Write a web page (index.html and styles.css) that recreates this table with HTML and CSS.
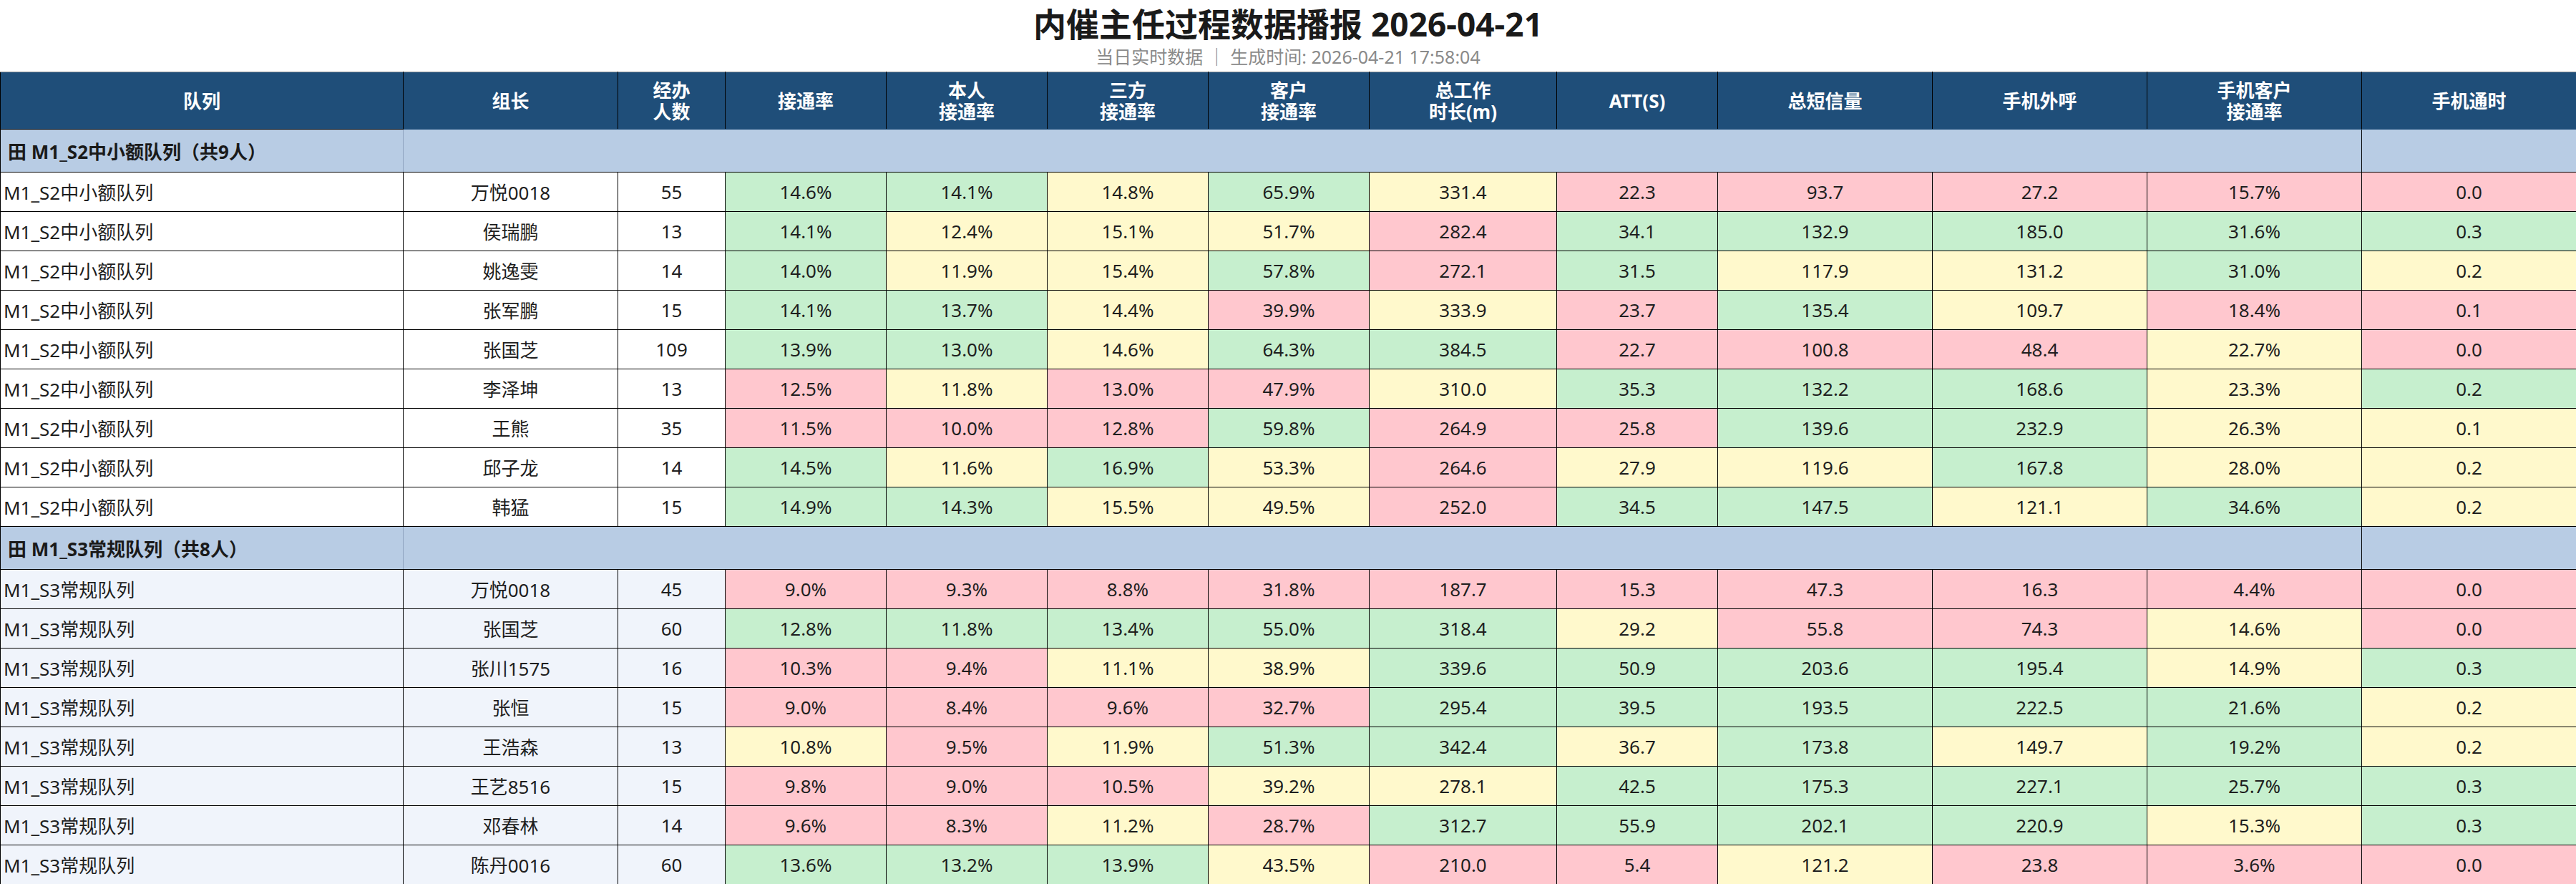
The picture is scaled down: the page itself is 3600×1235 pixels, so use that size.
FILE: index.html
```html
<!DOCTYPE html>
<html lang="zh-CN">
<head>
<meta charset="utf-8">
<title>内催主任过程数据播报</title>
<link rel="stylesheet" href="styles.css">
</head>
<body>
<header class="page-head">
  <h1 class="title">内催主任过程数据播报 2026-04-21</h1>
  <div class="sub">当日实时数据 ｜ 生成时间: 2026-04-21 17:58:04</div>
</header>
<table class="report">
  <colgroup>
    <col class="c-queue"><col class="c-lead"><col class="c-num">
    <col class="c-m"><col class="c-m"><col class="c-m"><col class="c-m">
    <col class="c-wide"><col class="c-m">
    <col class="c-l"><col class="c-l"><col class="c-l"><col class="c-l">
  </colgroup>
  <thead>
    <tr>
      <th>队列</th><th>组长</th><th>经办<br>人数</th><th>接通率</th><th>本人<br>接通率</th><th>三方<br>接通率</th><th>客户<br>接通率</th><th>总工作<br>时长(m)</th><th>ATT(S)</th><th>总短信量</th><th>手机外呼</th><th>手机客户<br>接通率</th><th>手机通时</th>
    </tr>
  </thead>
  <tbody>
    <tr class="grp"><td class="grp-name">田 M1_S2中小额队列（共9人）</td><td class="grp-span" colspan="11"></td><td class="grp-end"></td></tr>
    <tr class="row"><td class="q">M1_S2中小额队列</td><td>万悦0018</td><td>55</td><td class="g">14.6%</td><td class="g">14.1%</td><td class="y">14.8%</td><td class="g">65.9%</td><td class="y">331.4</td><td class="p">22.3</td><td class="p">93.7</td><td class="p">27.2</td><td class="p">15.7%</td><td class="p">0.0</td></tr>
    <tr class="row"><td class="q">M1_S2中小额队列</td><td>侯瑞鹏</td><td>13</td><td class="g">14.1%</td><td class="y">12.4%</td><td class="y">15.1%</td><td class="y">51.7%</td><td class="p">282.4</td><td class="g">34.1</td><td class="g">132.9</td><td class="g">185.0</td><td class="g">31.6%</td><td class="g">0.3</td></tr>
    <tr class="row"><td class="q">M1_S2中小额队列</td><td>姚逸雯</td><td>14</td><td class="g">14.0%</td><td class="y">11.9%</td><td class="y">15.4%</td><td class="g">57.8%</td><td class="p">272.1</td><td class="g">31.5</td><td class="y">117.9</td><td class="y">131.2</td><td class="g">31.0%</td><td class="y">0.2</td></tr>
    <tr class="row"><td class="q">M1_S2中小额队列</td><td>张军鹏</td><td>15</td><td class="g">14.1%</td><td class="g">13.7%</td><td class="y">14.4%</td><td class="p">39.9%</td><td class="y">333.9</td><td class="p">23.7</td><td class="g">135.4</td><td class="y">109.7</td><td class="p">18.4%</td><td class="p">0.1</td></tr>
    <tr class="row"><td class="q">M1_S2中小额队列</td><td>张国芝</td><td>109</td><td class="g">13.9%</td><td class="g">13.0%</td><td class="y">14.6%</td><td class="g">64.3%</td><td class="g">384.5</td><td class="p">22.7</td><td class="p">100.8</td><td class="p">48.4</td><td class="y">22.7%</td><td class="p">0.0</td></tr>
    <tr class="row"><td class="q">M1_S2中小额队列</td><td>李泽坤</td><td>13</td><td class="p">12.5%</td><td class="y">11.8%</td><td class="p">13.0%</td><td class="p">47.9%</td><td class="y">310.0</td><td class="g">35.3</td><td class="g">132.2</td><td class="g">168.6</td><td class="y">23.3%</td><td class="g">0.2</td></tr>
    <tr class="row"><td class="q">M1_S2中小额队列</td><td>王熊</td><td>35</td><td class="p">11.5%</td><td class="p">10.0%</td><td class="p">12.8%</td><td class="g">59.8%</td><td class="p">264.9</td><td class="p">25.8</td><td class="g">139.6</td><td class="g">232.9</td><td class="y">26.3%</td><td class="y">0.1</td></tr>
    <tr class="row"><td class="q">M1_S2中小额队列</td><td>邱子龙</td><td>14</td><td class="g">14.5%</td><td class="y">11.6%</td><td class="g">16.9%</td><td class="y">53.3%</td><td class="p">264.6</td><td class="y">27.9</td><td class="y">119.6</td><td class="g">167.8</td><td class="y">28.0%</td><td class="y">0.2</td></tr>
    <tr class="row"><td class="q">M1_S2中小额队列</td><td>韩猛</td><td>15</td><td class="g">14.9%</td><td class="g">14.3%</td><td class="y">15.5%</td><td class="y">49.5%</td><td class="p">252.0</td><td class="g">34.5</td><td class="g">147.5</td><td class="y">121.1</td><td class="g">34.6%</td><td class="y">0.2</td></tr>
    <tr class="grp"><td class="grp-name">田 M1_S3常规队列（共8人）</td><td class="grp-span" colspan="11"></td><td class="grp-end"></td></tr>
    <tr class="row alt"><td class="q">M1_S3常规队列</td><td>万悦0018</td><td>45</td><td class="p">9.0%</td><td class="p">9.3%</td><td class="p">8.8%</td><td class="p">31.8%</td><td class="p">187.7</td><td class="p">15.3</td><td class="p">47.3</td><td class="p">16.3</td><td class="p">4.4%</td><td class="p">0.0</td></tr>
    <tr class="row alt"><td class="q">M1_S3常规队列</td><td>张国芝</td><td>60</td><td class="g">12.8%</td><td class="g">11.8%</td><td class="g">13.4%</td><td class="g">55.0%</td><td class="g">318.4</td><td class="y">29.2</td><td class="p">55.8</td><td class="p">74.3</td><td class="y">14.6%</td><td class="p">0.0</td></tr>
    <tr class="row alt"><td class="q">M1_S3常规队列</td><td>张川1575</td><td>16</td><td class="p">10.3%</td><td class="p">9.4%</td><td class="y">11.1%</td><td class="y">38.9%</td><td class="g">339.6</td><td class="g">50.9</td><td class="g">203.6</td><td class="g">195.4</td><td class="y">14.9%</td><td class="g">0.3</td></tr>
    <tr class="row alt"><td class="q">M1_S3常规队列</td><td>张恒</td><td>15</td><td class="p">9.0%</td><td class="p">8.4%</td><td class="p">9.6%</td><td class="p">32.7%</td><td class="g">295.4</td><td class="g">39.5</td><td class="g">193.5</td><td class="g">222.5</td><td class="g">21.6%</td><td class="y">0.2</td></tr>
    <tr class="row alt"><td class="q">M1_S3常规队列</td><td>王浩森</td><td>13</td><td class="y">10.8%</td><td class="p">9.5%</td><td class="y">11.9%</td><td class="g">51.3%</td><td class="g">342.4</td><td class="y">36.7</td><td class="g">173.8</td><td class="y">149.7</td><td class="g">19.2%</td><td class="y">0.2</td></tr>
    <tr class="row alt"><td class="q">M1_S3常规队列</td><td>王艺8516</td><td>15</td><td class="p">9.8%</td><td class="p">9.0%</td><td class="p">10.5%</td><td class="y">39.2%</td><td class="y">278.1</td><td class="g">42.5</td><td class="g">175.3</td><td class="g">227.1</td><td class="g">25.7%</td><td class="g">0.3</td></tr>
    <tr class="row alt"><td class="q">M1_S3常规队列</td><td>邓春林</td><td>14</td><td class="p">9.6%</td><td class="p">8.3%</td><td class="y">11.2%</td><td class="p">28.7%</td><td class="g">312.7</td><td class="g">55.9</td><td class="g">202.1</td><td class="g">220.9</td><td class="y">15.3%</td><td class="g">0.3</td></tr>
    <tr class="row alt"><td class="q">M1_S3常规队列</td><td>陈丹0016</td><td>60</td><td class="g">13.6%</td><td class="g">13.2%</td><td class="g">13.9%</td><td class="y">43.5%</td><td class="p">210.0</td><td class="p">5.4</td><td class="y">121.2</td><td class="p">23.8</td><td class="p">3.6%</td><td class="p">0.0</td></tr>
  </tbody>
</table>
</body>
</html>
```

FILE: styles.css
```css
html, body {
  margin: 0;
  padding: 0;
  background: #ffffff;
}

body {
  font-family: "Noto Sans", "Noto Sans CJK SC", sans-serif;
  color: #222222;
}

.page-head {
  height: 100px;
  box-sizing: border-box;
  padding-top: 6px;
  text-align: center;
}

.title {
  margin: 0;
  font-size: 46px;
  line-height: 55px;
  font-weight: 700;
  color: #1a1a1a;
}

.sub {
  margin-top: 3px;
  font-size: 25px;
  line-height: 30px;
  color: #8a8a8a;
}

.report {
  width: 3600px;
  table-layout: fixed;
  border-collapse: collapse;
  font-size: 26px;
}

.c-queue { width: 563px; }
.c-lead { width: 300px; }
.c-num { width: 150px; }
.c-m { width: 225px; }
.c-wide { width: 262px; }
.c-l { width: 300px; }

.report th,
.report td {
  border: 1px solid #000000;
  padding: 0 4px;
  box-sizing: border-box;
}

.report thead th {
  height: 80px;
  background: #1f4e79;
  color: #ffffff;
  font-weight: 700;
  line-height: 30px;
  text-align: center;
  border-top: 1px solid #9a9a9a;
  border-bottom-color: #1f4e79;
}

.report thead th:first-child {
  border-bottom-color: #000000;
}

.grp td {
  height: 60px;
  background: #b8cce4;
}

.grp .grp-name {
  padding-left: 10px;
  font-weight: 700;
  color: #1a1a1a;
  text-align: left;
  border-right-color: #8fa3bf;
  border-top-color: #000000;
}

.grp .grp-span {
  border-left-color: #8fa3bf;
  border-top-color: #1f4e79;
  border-right-color: #000000;
}

.row td {
  height: 55px;
  text-align: center;
  background: #ffffff;
  color: #1e1e1e;
}

.row td.q {
  text-align: left;
}

.row.alt td {
  background: #f0f4fb;
}

.row td.g,
.row.alt td.g {
  background: #c6efce;
}

.row td.y,
.row.alt td.y {
  background: #fff9cc;
}

.row td.p,
.row.alt td.p {
  background: #ffc7ce;
}
```
